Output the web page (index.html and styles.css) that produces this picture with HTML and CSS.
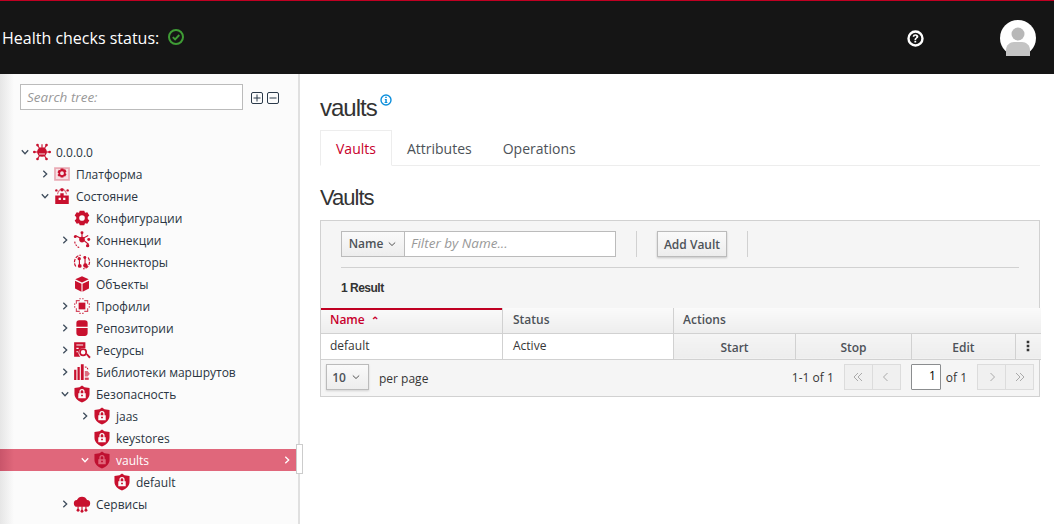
FILE: index.html
```html
<!DOCTYPE html>
<html lang="en">
<head>
<meta charset="utf-8">
<title>vaults</title>
<link rel="stylesheet" href="styles.css">
</head>
<body>
<svg class="defs" width="0" height="0" aria-hidden="true">
  <symbol id="i-shield" viewBox="0 0 16 16"><path fill-rule="evenodd" d="M8 .4l2.200 1.500 4.500.8v5c0 3.500-2.700 6.200-6.700 7.900C4 13.900 1.300 11.200 1.300 7.700v-5l4.500-.8zM4.700 7.300v4.400h6.600V7.300h-1V5.900a2.300 2.300 0 0 0-4.600 0v1.400zm2.100 0V5.900a1.200 1.200 0 0 1 2.400 0v1.400zM7.200 8.700h1.600v1.400H7.200z"/></symbol>
  <symbol id="i-server" viewBox="0 0 16 16"><path d="M1 2h14v12H1z" opacity=".35"/><path d="M2.500 3.500h11v9h-11z" fill="#fff" opacity=".65"/><path fill-rule="evenodd" d="M6.800 3h2.400l.4 1.100 1.200-.4 1.200 2.100-.9.9v.6l.9.9-1.200 2.100-1.200-.4-.4 1.100H6.800l-.4-1.100-1.200.4L4 8.800l.9-.9v-.6L4 6.400l1.200-2.100 1.200.4zM8 5.600a1.700 1.700 0 1 0 0 3.400 1.700 1.700 0 0 0 0-3.400z"/></symbol>
  <symbol id="i-host" viewBox="0 0 16 16"><path d="M2 7.500h12V15H2zM6.500 5.500h3v2h-3z"/><path d="M5 9.500h2v2H5zM9 9.500h2v2H9z" fill="#fbfbfb"/><path d="M3.500 6.500C4 2.500 7 1 8 1s4 1.500 4.500 5.500h-1C11 3.500 9 2.200 8 2.200S5 3.500 4.500 6.500z" opacity=".6"/><circle cx="8" cy="2.500" r="1.500"/><circle cx="13" cy="3" r="1.100"/><circle cx="3" cy="3" r="1.100"/></symbol>
  <symbol id="i-gear" viewBox="0 0 16 16"><path fill-rule="evenodd" d="M6 1.500h4l.7 1.800 2-.5 1.800 3-1.400 1.300v1.800l1.400 1.300-1.800 3-2-.5-.7 1.800H6l-.7-1.800-2 .5-1.800-3 1.400-1.300V7.100L1.500 5.800l1.800-3 2 .5zM8 5.500a2.500 2.500 0 1 0 0 5 2.500 2.500 0 0 0 0-5z"/></symbol>
  <symbol id="i-conn" viewBox="0 0 16 16"><path d="M8 1v6l5.500-3M8 7l6 5M8 7l-6-3M8 7v3" fill="none" stroke="currentColor" stroke-width="1"/><circle cx="8" cy="7.500" r="2.500"/><circle cx="8" cy="1.500" r="1.300"/><circle cx="14" cy="7.500" r="1.300"/><circle cx="13" cy="13" r="1.500"/><circle cx="2" cy="5" r="1.300"/><path d="M1.500 9.500c.5 3 2.500 5 5 5.500" fill="none" stroke="currentColor" stroke-dasharray="1.600 1"/></symbol>
  <symbol id="i-connector" viewBox="0 0 16 16"><path d="M2.500 12C-.5 7.500 2.500 2 7 2M13.500 4c3 4.500 0 10-4.500 10" fill="none" stroke="currentColor" stroke-width="1.100" stroke-dasharray="3 1"/><circle cx="5.500" cy="5" r="1.500"/><circle cx="6" cy="11.500" r="1.700"/><circle cx="11" cy="11" r="2"/><circle cx="10.500" cy="4" r="1.300"/><path d="M5.700 5v6M10.700 4v6" stroke="currentColor" fill="none"/></symbol>
  <symbol id="i-cube" viewBox="0 0 16 16"><path d="M8 1l6 2.800L8 6.600 2 3.800zM1.800 5l5.700 2.800v7L1.800 12zM14.200 5L8.500 7.800v7l5.700-2.800z"/></symbol>
  <symbol id="i-profile" viewBox="0 0 16 16"><path d="M5 5h6v6H5z"/><path d="M3 6V3.200h3M10 3.200h3V6M13 10v2.800h-3M6 12.800H3V10" fill="none" stroke="currentColor" opacity=".75"/><path d="M1.500 5.500v5M14.500 5.500v5M5.500 1.500h5M5.500 14.500h5" fill="none" stroke="currentColor" stroke-dasharray="1.500 1" opacity=".7"/></symbol>
  <symbol id="i-db" viewBox="0 0 16 16"><path fill-rule="evenodd" d="M5.500 1h5A2.500 2.500 0 0 1 13 3.500v9a2.500 2.500 0 0 1-2.500 2.500h-5A2.500 2.500 0 0 1 3 12.500v-9A2.500 2.500 0 0 1 5.500 1zM3 6.800v1.300h10V6.800z"/></symbol>
  <symbol id="i-res" viewBox="0 0 16 16"><path fill-rule="evenodd" d="M1 1h10v5.500l-1.200-.3a4.300 4.300 0 0 0-3.600 7.300L6.500 14H1zm2 2v1h6V3zm0 3v1h2V6zm0 3v1h1.500V9z"/><path fill-rule="evenodd" d="M9 6.500a3.500 3.500 0 1 1 0 7 3.500 3.500 0 0 1 0-7zm0 1.500a2 2 0 1 0 0 4 2 2 0 0 0 0-4z"/><path d="M11.500 12l1.200-1 3 3.200-1.300 1.300z"/></symbol>
  <symbol id="i-lib" viewBox="0 0 16 16"><path d="M1 6h2v9H1zM4 3.500h2V15H4zM7 1h2.500v14H7z"/><path d="M10.500 3.500c2 0 2.800 1 2.500 2.500" fill="none" stroke="currentColor" stroke-dasharray="1.500 .8"/><path d="M10.500 7H13l2 2.500L13 12h-2.500z" opacity=".6"/><path d="M10.500 13H14v2h-3.500z" opacity=".8"/></symbol>
  <symbol id="i-cloud" viewBox="0 0 16 16"><path d="M4 10.500a3 3 0 0 1-.5-6A5 5 0 0 1 8 1.500a5 5 0 0 1 4.500 3 3 3 0 0 1-.5 6z"/><path d="M4.500 10v3M8 10v4M11.500 10v3" stroke="currentColor" fill="none"/><circle cx="4.500" cy="13.500" r="1.300"/><circle cx="8" cy="14.500" r="1.300"/><circle cx="11.500" cy="13.500" r="1.300"/></symbol>
  <symbol id="i-virus" viewBox="0 0 16 16"><path d="M1.500 8h13M4 2l8 12M12 2L4 14M8 1v3" stroke="currentColor" fill="none"/><circle cx="8" cy="8" r="4.300"/><circle cx="4" cy="1.800" r="1.200"/><circle cx="12" cy="1.800" r="1.200"/><circle cx="1.200" cy="8" r="1.200"/><circle cx="14.800" cy="8" r="1.200"/><circle cx="4" cy="14.200" r="1.200"/><circle cx="12" cy="14.200" r="1.200"/><path d="M5.300 9.200h5.400v1.100H5.300z" fill="#fbfbfb" opacity=".7"/></symbol>
  <symbol id="i-right" viewBox="0 0 10 10"><path d="M3.300 1.800L6.700 5 3.300 8.200" fill="none" stroke="currentColor" stroke-width="1.300"/></symbol>
  <symbol id="i-down" viewBox="0 0 10 10"><path d="M1.800 3.300L5 6.700l3.200-3.400" fill="none" stroke="currentColor" stroke-width="1.300"/></symbol>
  <symbol id="i-thin" viewBox="0 0 10 10"><path d="M1.800 3.500L5 6.500l3.200-3" fill="none" stroke="currentColor" stroke-width="1"/></symbol>
  <symbol id="p-prev" viewBox="0 0 12 12"><path d="M7.500 2L3.500 6l4 4" fill="none" stroke="currentColor"/></symbol>
  <symbol id="p-next" viewBox="0 0 12 12"><path d="M4.500 2l4 4-4 4" fill="none" stroke="currentColor"/></symbol>
  <symbol id="p-first" viewBox="0 0 12 12"><path d="M6 2L2 6l4 4M10 2L6 6l4 4" fill="none" stroke="currentColor"/></symbol>
  <symbol id="p-last" viewBox="0 0 12 12"><path d="M2 2l4 4-4 4M6 2l4 4-4 4" fill="none" stroke="currentColor"/></symbol>
</svg>

<header class="topbar">
  <div class="health">
    <span>Health checks status:</span>
    <svg class="health-icon" viewBox="0 0 16 16"><circle cx="8" cy="8" r="7" fill="none" stroke="#3f9c35" stroke-width="2"/><path d="M4.800 8.200l2.300 2.300 4.200-4.500" fill="none" stroke="#3f9c35" stroke-width="1.900"/></svg>
  </div>
  <svg class="help" viewBox="0 0 17 17"><circle cx="8.500" cy="8.500" r="7" fill="#151515" stroke="#fff" stroke-width="2.400"/><path d="M5.700 6.700c0-1.700 1.300-2.500 2.800-2.500s2.900.9 2.900 2.400c0 2-2.300 1.800-2.300 3.500H7.400C7.400 7.800 9.300 8 9.300 6.700c0-.6-.3-1-.9-1-.7 0-1 .5-1 1.100zM7.400 10.800h1.800v1.800H7.400z" fill="#fff"/></svg>
  <svg class="avatar" viewBox="0 0 36 36"><circle cx="18" cy="18" r="18" fill="#fff"/><circle cx="18" cy="14" r="6.500" fill="#b8b8b8"/><path d="M6 36v-6c0-5 4-8 8-8h8c4 0 8 3 8 8v6z" fill="#c4c4c4"/></svg>
</header>

<div class="shell">
  <aside class="sidebar">
    <div class="search-row">
      <input class="search" type="text" placeholder="Search tree:">
      <svg class="mini" viewBox="0 0 12 12"><rect x=".5" y=".5" width="11" height="11" rx="1.500" fill="none" stroke="#2b3a4a"/><path d="M6 2.500v7M2.500 6h7" stroke="#2b3a4a"/></svg>
      <svg class="mini" viewBox="0 0 12 12"><rect x=".5" y=".5" width="11" height="11" rx="1.500" fill="none" stroke="#2b3a4a"/><path d="M2.500 6h7" stroke="#2b3a4a"/></svg>
    </div>
    <ul class="tree">
      <li class="node l0"><svg class="chev"><use href="#i-down"/></svg><svg class="ico"><use href="#i-virus"/></svg><span>0.0.0.0</span></li>
      <li class="node l1"><svg class="chev"><use href="#i-right"/></svg><svg class="ico"><use href="#i-server"/></svg><span>Платформа</span></li>
      <li class="node l1"><svg class="chev"><use href="#i-down"/></svg><svg class="ico"><use href="#i-host"/></svg><span>Состояние</span></li>
      <li class="node l2"><span class="chev"></span><svg class="ico"><use href="#i-gear"/></svg><span>Конфигурации</span></li>
      <li class="node l2"><svg class="chev"><use href="#i-right"/></svg><svg class="ico"><use href="#i-conn"/></svg><span>Коннекции</span></li>
      <li class="node l2"><span class="chev"></span><svg class="ico"><use href="#i-connector"/></svg><span>Коннекторы</span></li>
      <li class="node l2"><span class="chev"></span><svg class="ico"><use href="#i-cube"/></svg><span>Объекты</span></li>
      <li class="node l2"><svg class="chev"><use href="#i-right"/></svg><svg class="ico"><use href="#i-profile"/></svg><span>Профили</span></li>
      <li class="node l2"><svg class="chev"><use href="#i-right"/></svg><svg class="ico"><use href="#i-db"/></svg><span>Репозитории</span></li>
      <li class="node l2"><svg class="chev"><use href="#i-right"/></svg><svg class="ico"><use href="#i-res"/></svg><span>Ресурсы</span></li>
      <li class="node l2"><svg class="chev"><use href="#i-right"/></svg><svg class="ico"><use href="#i-lib"/></svg><span>Библиотеки маршрутов</span></li>
      <li class="node l2"><svg class="chev"><use href="#i-down"/></svg><svg class="ico"><use href="#i-shield"/></svg><span>Безопасность</span></li>
      <li class="node l3"><svg class="chev"><use href="#i-right"/></svg><svg class="ico"><use href="#i-shield"/></svg><span>jaas</span></li>
      <li class="node l3"><span class="chev"></span><svg class="ico"><use href="#i-shield"/></svg><span>keystores</span></li>
      <li class="node l3 selected"><svg class="chev"><use href="#i-down"/></svg><svg class="ico"><use href="#i-shield"/></svg><span>vaults</span><svg class="chev sel-arrow"><use href="#i-right"/></svg></li>
      <li class="node l4"><span class="chev"></span><svg class="ico"><use href="#i-shield"/></svg><span>default</span></li>
      <li class="node l2"><svg class="chev"><use href="#i-right"/></svg><svg class="ico"><use href="#i-cloud"/></svg><span>Сервисы</span></li>
    </ul>
    <div class="splitter"></div>
  </aside>

  <main class="content">
    <h1 class="title">vaults<svg class="info" viewBox="0 0 12 12"><circle cx="6" cy="6" r="5" fill="none" stroke="#0d8fdc" stroke-width="1.400"/><path d="M5.200 2.700h1.600v1.400H5.200zM4.800 5h2v3h.6v1H4.600V8h.7V6h-.5z" fill="#0d8fdc"/></svg></h1>
    <nav class="tabs">
      <a class="tab active">Vaults</a>
      <a class="tab">Attributes</a>
      <a class="tab">Operations</a>
    </nav>
    <h2 class="subtitle">Vaults</h2>
    <section class="toolbar">
      <div class="toolbar-row">
        <div class="filter">
          <button class="filter-btn">Name<svg class="btn-chev"><use href="#i-thin"/></svg></button>
          <input class="filter-input" type="text" placeholder="Filter by Name...">
        </div>
        <span class="divider"></span>
        <button class="add-btn">Add Vault</button>
        <span class="divider"></span>
      </div>
      <div class="results">1 Result</div>
    </section>
    <table class="grid">
      <colgroup>
        <col class="c-name"><col class="c-status"><col class="c-start"><col class="c-stop"><col class="c-edit"><col class="c-kebab">
      </colgroup>
      <thead>
        <tr>
          <th class="sorted">Name<span class="caret">⌃</span></th>
          <th>Status</th>
          <th colspan="4">Actions</th>
        </tr>
      </thead>
      <tbody>
        <tr>
          <td class="first">default</td>
          <td>Active</td>
          <td class="act">Start</td>
          <td class="act">Stop</td>
          <td class="act">Edit</td>
          <td class="act kebab"><svg class="kebab-icon" viewBox="0 0 4 12"><path d="M.7.800h2.600v2.400H.7zM.7 4.800h2.600v2.400H.7zM.7 8.800h2.600v2.400H.7z" fill="#333"/></svg></td>
        </tr>
      </tbody>
    </table>
    <footer class="pager">
      <button class="per-btn">10<svg class="btn-chev"><use href="#i-thin"/></svg></button>
      <span class="per-label">per page</span>
      <span class="count">1-1 of 1</span>
      <span class="pg-group">
        <button class="pg-btn"><svg class="pg-ico"><use href="#p-first"/></svg></button><button class="pg-btn"><svg class="pg-ico"><use href="#p-prev"/></svg></button>
      </span>
      <input class="pg-input" type="text" value="1">
      <span class="of">of 1</span>
      <span class="pg-group">
        <button class="pg-btn"><svg class="pg-ico"><use href="#p-next"/></svg></button><button class="pg-btn"><svg class="pg-ico"><use href="#p-last"/></svg></button>
      </span>
    </footer>
  </main>
</div>
</body>
</html>
```
FILE: styles.css
```css
* { box-sizing: border-box; }
html, body { margin: 0; height: 100%; overflow: hidden; }
body { font-family: "Open Sans", "Liberation Sans", sans-serif; font-size: 12px; color: #363636; background: #fff; }
.defs { position: absolute; }
button { font-family: inherit; }

.topbar { height: 74px; background: #151515; border-top: 1px solid #c00022; display: flex; align-items: center; position: relative; color: #fff; }
.health { display: flex; align-items: center; margin-left: 2px; font-size: 16px; gap: 9px; margin-top: 1px; }
.health-icon { width: 16px; height: 16px; margin-top: -2px; }
.help { width: 17px; height: 17px; margin-left: auto; margin-right: 76px; margin-top: 1px; }
.avatar { width: 36px; height: 36px; margin-right: 18px; }

.shell { display: flex; height: 450px; }
.sidebar { width: 300px; flex: none; background: linear-gradient(90deg, #e6e6e6 0, #fbfbfb 14px); border-right: 2px solid #e0e0e0; position: relative; overflow: visible; }
.search-row { display: flex; align-items: center; padding: 10px 0 0 20px; }
.search { width: 223px; height: 26px; border: 1px solid #bbb; background: #fff; padding: 0 6px; font: italic 13.5px "Open Sans", sans-serif; outline: none; }
.search::placeholder { color: #999; opacity: 1; }
.mini { width: 12px; height: 12px; margin-left: 8px; margin-top: 2px; }
.mini + .mini { margin-left: 4px; }

.tree { list-style: none; margin: 31px 0 0; padding: 0; }
.node { height: 22px; display: flex; align-items: center; color: #2a3542; white-space: nowrap; }
.node.l0 { padding-left: 20px; }
.node.l1 { padding-left: 40px; }
.node.l2 { padding-left: 60px; }
.node.l3 { padding-left: 80px; }
.node.l4 { padding-left: 100px; }
.chev { width: 10px; height: 10px; flex: none; color: #3f4d5c; }
.ico { width: 18px; height: 18px; flex: none; margin: 0 5px 0 3px; color: #c8102e; fill: #c8102e; }
.selected { background: linear-gradient(90deg, #c9556a 0, #e0677b 14px); color: #fff; margin-right: 0; width: 297px; }
.selected .chev { color: #fff; }
.selected .ico { color: #bf1030; fill: #bf1030; }
.sel-arrow { margin-left: auto; margin-right: 5px; }
.splitter { position: absolute; left: 296px; top: 370px; width: 7px; height: 30px; background: #fff; border: 1px solid #ccc; }

.content { flex: 1; padding: 0 14px 0 20px; min-width: 0; }
.title { margin: 0; padding-top: 20px; height: 56px; font: 400 24px/28px "Liberation Sans", sans-serif; letter-spacing: -1px; color: #333; }
.info { width: 12px; height: 12px; vertical-align: 10px; margin-left: 3px; }
.tabs { display: flex; height: 36px; border-bottom: 1px solid #ededed; font-size: 14px; }
.tab { padding: 0 15px; line-height: 37px; color: #4d5258; }
.tab:last-child { margin-left: 1px; }
.tab.active { color: #c8002c; background: #fff; border: 1px solid #ededed; border-bottom: 1px solid #fff; height: 36px; line-height: 36px; }
.subtitle { margin: 0; height: 54px; padding-top: 18px; font: 400 22px/28px "Liberation Sans", sans-serif; letter-spacing: -1px; color: #333; }

.toolbar { height: 88px; background: #f5f5f5; border: 1px solid #d1d1d1; border-bottom: 0; padding: 10px 20px 0; }
.toolbar-row { display: flex; align-items: center; height: 26px; border: 0; }
.filter { display: flex; height: 26px; }
.filter-btn { width: 63px; height: 26px; border: 1px solid #bbb; border-right: 0; background: linear-gradient(#fafafa, #ededed); font-size: 12px; font-weight: 600; color: #4d5258; padding: 0 0 1px; display: flex; align-items: center; justify-content: center; gap: 1px; }
.filter-input { width: 212px; height: 26px; border: 1px solid #bbb; background: #fff; padding: 0 6px 2px; font: italic 13.5px "Open Sans", sans-serif; outline: none; }
.filter-input::placeholder { color: #999; opacity: 1; }
.btn-chev { width: 10px; height: 10px; margin-left: 3px; color: #555; }
.divider { width: 1px; height: 26px; background: #d1d1d1; margin: 0 20px; }
.add-btn { width: 70px; height: 26px; border: 1px solid #bbb; background: linear-gradient(#fafafa, #ededed); font-size: 12px; font-weight: 600; color: #4d5258; padding: 0; box-shadow: 0 1px 2px rgba(0,0,0,.2); }
.results { margin-top: 10px; border-top: 1px solid #d1d1d1; padding-top: 12px; font: 700 12px/16px "Liberation Sans", sans-serif; letter-spacing: -.5px; color: #333; }

.grid { width: 720px; table-layout: fixed; border-collapse: collapse; border-left: 1px solid #d1d1d1; }
.c-name { width: 182px; }
.c-status { width: 171px; }
.c-start { width: 122px; }
.c-stop { width: 116px; }
.c-edit { width: 104px; }
.c-kebab { width: 25px; }
.grid th { height: 25px; padding: 0 10px 2px; text-align: left; font-size: 12px; font-weight: 600; color: #4d5258; background: linear-gradient(#fafafa, #ededed); border-right: 1px solid #d1d1d1; border-bottom: 1px solid #d1d1d1; }
.grid th:last-child { border-right: 0; padding-left: 9px; }
.grid th.sorted { color: #c8002c; box-shadow: inset 0 2px 0 #c00022; padding-left: 9px; }
.caret { margin-left: 6px; font-size: 10px; }
.grid td { height: 26px; padding: 0 10px 2px; font-size: 12px; color: #363636; background: #fff; border-right: 1px solid #d1d1d1; border-bottom: 1px solid #d1d1d1; }
.grid td.first { padding-left: 9px; }
.grid td.act { background: linear-gradient(#f5f5f5, #ededed); text-align: center; font-weight: 600; color: #4d5258; padding: 2px 10px 0; }
.grid td.kebab { padding: 0; border-right: 0; }
.kebab-icon { width: 4px; height: 12px; display: block; margin: 0 auto; }

.pager { height: 37px; display: flex; align-items: center; background: #f5f5f5; border: 1px solid #d1d1d1; border-top: 0; padding: 0 5px 1px; font-size: 12px; color: #363636; }
.per-btn { width: 43px; height: 26px; border: 1px solid #bbb; background: linear-gradient(#fafafa, #ededed); font-size: 12px; font-weight: 600; color: #4d5258; padding: 0 2px 0 0; display: flex; align-items: center; justify-content: center; gap: 2px; box-shadow: 0 1px 2px rgba(0,0,0,.15); }
.per-label { margin: 2px 0 0 10px; }
.count { margin-left: auto; }
.pg-group { display: flex; margin-left: 11px; }
.pg-btn { width: 29px; height: 26px; border: 1px solid #dcdcdc; background: #f0f0f0; color: #aaa; padding: 0; margin-left: -1px; display: flex; align-items: center; justify-content: center; }
.pg-ico { width: 12px; height: 12px; }
.pg-group + .pg-input { margin-left: 10px; }
.pg-input { width: 30px; height: 26px; border: 1px solid #8b8d8f; border-radius: 1px; text-align: right; padding: 0 4px 3px; font: 12px "Open Sans", sans-serif; background: #fff; }
.of { margin-left: 5px; }
.of + .pg-group { margin-left: 11px; }
```
